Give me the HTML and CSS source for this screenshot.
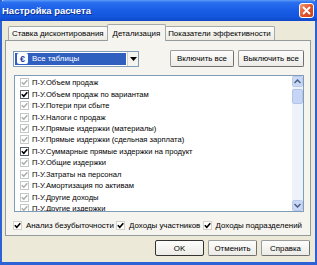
FILE: index.html
```html
<!DOCTYPE html>
<html lang="ru">
<head>
  <meta charset="UTF-8">
  <title>Настройка расчета</title>
  <link rel="stylesheet" href="styles.css">
</head>
<body>
  <div class="window">
    <div class="titlebar">
      <span class="title">Настройка расчета</span>
      <span class="close">
        <svg width="9" height="9" viewBox="0 0 9 9"><path d="M1 1 L8 8 M8 1 L1 8" stroke="#fff" stroke-width="1.8"/></svg>
      </span>
    </div>

    <div class="body">
      <div class="tabs">
        <div class="tab">Ставка дисконтирования</div>
        <div class="tab active">Детализация</div>
        <div class="tab">Показатели эффективности</div>
      </div>

      <div class="panel">
        <div class="toolbar">
          <div class="combo">
            <div class="combo-value">
              <span class="combo-icon">€</span>
              Все таблицы
            </div>
            <div class="combo-arrow">
              <svg width="7" height="4" viewBox="0 0 7 4"><path d="M0 0 H7 L3.5 4 Z" fill="#000"/></svg>
            </div>
          </div>
          <div class="spacer"></div>
          <button class="btn">Включить все</button>
          <button class="btn">Выключить все</button>
        </div>

        <div class="list">
          <div class="items">
            <div class="item"><span class="cb dim"></span>П-У.Объем продаж</div>
            <div class="item"><span class="cb on"></span>П-У.Объем продаж по вариантам</div>
            <div class="item"><span class="cb dim"></span>П-У.Потери при сбыте</div>
            <div class="item"><span class="cb dim"></span>П-У.Налоги с продаж</div>
            <div class="item"><span class="cb dim"></span>П-У.Прямые издержки (материалы)</div>
            <div class="item"><span class="cb dim"></span>П-У.Прямые издержки (сдельная зарплата)</div>
            <div class="item"><span class="cb on"></span>П-У.Суммарные прямые издержки на продукт</div>
            <div class="item"><span class="cb dim"></span>П-У.Общие издержки</div>
            <div class="item"><span class="cb dim"></span>П-У.Затраты на персонал</div>
            <div class="item"><span class="cb dim"></span>П-У.Амортизация по активам</div>
            <div class="item"><span class="cb dim"></span>П-У.Другие доходы</div>
            <div class="item"><span class="cb dim"></span>П-У.Другие издержки</div>
          </div>
          <div class="scrollbar">
            <div class="sb-btn">
              <svg width="7" height="5" viewBox="0 0 7 5"><path d="M0.5 4 L3.5 1 L6.5 4" stroke="#4d6185" stroke-width="1.5" fill="none"/></svg>
            </div>
            <div class="sb-thumb"></div>
            <div class="sb-track"></div>
            <div class="sb-btn">
              <svg width="7" height="5" viewBox="0 0 7 5"><path d="M0.5 1 L3.5 4 L6.5 1" stroke="#4d6185" stroke-width="1.5" fill="none"/></svg>
            </div>
          </div>
        </div>

        <div class="options">
          <label class="option"><span class="cb plain on"></span>Анализ безубыточности</label>
          <label class="option"><span class="cb plain on"></span>Доходы участников</label>
          <label class="option"><span class="cb plain on"></span>Доходы подразделений</label>
        </div>
      </div>

      <div class="actions">
        <button class="btn default">OK</button>
        <button class="btn">Отменить</button>
        <button class="btn">Справка</button>
      </div>
    </div>
  </div>
</body>
</html>
```

FILE: styles.css
```css
* {
  margin: 0;
  padding: 0;
  box-sizing: border-box;
}

body {
  width: 317px;
  height: 265px;
  overflow: hidden;
  font-family: "Liberation Sans", Arial, sans-serif;
  font-size: 7.9px;
  color: #000;
  background: #fff;
}

.window {
  width: 317px;
  height: 265px;
  display: flex;
  flex-direction: column;
  background: #ece9d8;
  border: 2px solid #2d62d6;
  border-top: 0;
  border-bottom-width: 3px;
}

/* заголовок окна */
.titlebar {
  height: 21px;
  margin: 0 -2px;
  padding: 0 3px 0 2px;
  display: flex;
  align-items: center;
  justify-content: space-between;
  background: linear-gradient(#5d9bf7 0%, #2a6ff0 12%, #1a5fe6 45%, #1456de 80%, #1048c8 100%);
  border-radius: 5px 5px 0 0;
}

.title {
  color: #fff;
  font-weight: bold;
  font-size: 9.5px;
  text-shadow: 1px 1px 0 #0b2d8a;
}

.close {
  width: 15px;
  height: 15px;
  display: flex;
  align-items: center;
  justify-content: center;
  border: 1px solid #fff;
  border-radius: 3px;
  background: linear-gradient(135deg, #f29a74 0%, #e0542c 50%, #c8421e 100%);
}

.body {
  flex: 1;
  display: flex;
  flex-direction: column;
  padding: 3px 4px 0 3px;
}

/* вкладки */
.tabs {
  height: 16px;
  display: flex;
  align-items: flex-end;
  padding-left: 3px;
}

.tab {
  height: 14px;
  padding: 0 3px;
  display: flex;
  align-items: center;
  border: 1px solid #a4a9ab;
  border-bottom: 0;
  border-radius: 2px 2px 0 0;
  background: linear-gradient(#fdfdfb, #eceae2);
  white-space: nowrap;
}

.tab + .tab {
  border-left: 0;
}

.tab.active {
  height: 17px;
  margin: 0 -1px -1px;
  padding: 0 5px;
  border-left: 1px solid #a4a9ab;
  background: #f5f4ef;
  position: relative;
  z-index: 1;
}

.tab.active + .tab {
  border-left: 0;
}

.panel {
  height: 196px;
  display: flex;
  flex-direction: column;
  padding: 9px 6px 0 7px;
  border: 1px solid #939b9d;
  background: #f5f4ef;
}

.toolbar {
  height: 17px;
  display: flex;
  align-items: center;
}

.spacer {
  flex: 1;
}

.combo {
  width: 126px;
  height: 16px;
  display: flex;
  border: 1px solid #7f9db9;
  background: #fff;
}

.combo-value {
  flex: 1;
  display: flex;
  align-items: center;
  gap: 4px;
  margin: 1px;
  padding-left: 2px;
  background: #2f5fbf;
  color: #fff;
}

.combo-icon {
  width: 11px;
  height: 11px;
  display: flex;
  align-items: center;
  justify-content: center;
  border-radius: 2px;
  background: #fff;
  color: #1d3f9c;
  font-weight: bold;
  font-size: 9px;
}

.combo-arrow {
  width: 11px;
  display: flex;
  align-items: center;
  justify-content: center;
  border-left: 1px solid #d4d0c8;
  background: #f4f3ee;
}

.btn {
  height: 17px;
  padding: 0 3px;
  font-family: inherit;
  font-size: 7.9px;
  color: #000;
  white-space: nowrap;
  border: 1px solid #9c9c9c;
  border-right-color: #707070;
  border-bottom-color: #707070;
  border-radius: 2px;
  background: linear-gradient(#fdfdfc, #ecebe6);
}

.toolbar .btn {
  width: 64px;
  margin-left: 4px;
}

.toolbar .btn:last-child {
  width: 66px;
}

/* список таблиц */
.list {
  height: 137px;
  margin: 8px 0 0 1px;
  display: flex;
  border: 1px solid #7f9db9;
  background: #fff;
  overflow: hidden;
}

.items {
  flex: 1;
  padding: 1px 0 0 5px;
  font-size: 7.6px;
}

.item {
  height: 11.45px;
  display: flex;
  align-items: center;
  white-space: nowrap;
}

.cb {
  width: 9px;
  height: 9px;
  flex-shrink: 0;
  margin-right: 3px;
  border: 1px solid #1c5180;
  background: #fff center / 7px 7px no-repeat;
}

.cb.on {
  background-image: url("data:image/svg+xml,%3Csvg xmlns='http://www.w3.org/2000/svg' viewBox='0 0 7 7'%3E%3Cpath d='M0.8 3.2 L2.8 5.3 L6.3 1.3' stroke='%23000' stroke-width='1.6' fill='none'/%3E%3C/svg%3E");
}

.cb.dim {
  border-color: #c4c8c6;
  background-image: url("data:image/svg+xml,%3Csvg xmlns='http://www.w3.org/2000/svg' viewBox='0 0 7 7'%3E%3Cpath d='M0.8 3.2 L2.8 5.3 L6.3 1.3' stroke='%23a8aba8' stroke-width='1.4' fill='none'/%3E%3C/svg%3E");
}

.item .cb.on {
  border-color: #55606a;
}

.scrollbar {
  width: 11px;
  display: flex;
  flex-direction: column;
  background: #eef3fb;
}

.sb-btn {
  height: 11px;
  display: flex;
  align-items: center;
  justify-content: center;
  border: 1px solid #b8c9ea;
  border-radius: 2px;
  background: #c9d8f6;
}

.sb-thumb {
  height: 15px;
  margin-top: 2px;
  border: 1px solid #b3c4e8;
  border-radius: 2px;
  background: #c6d5f5;
}

.sb-track {
  flex: 1;
}

.options {
  margin-top: 7px;
  height: 13px;
  display: flex;
  align-items: center;
  justify-content: space-between;
  padding-right: 2px;
}

.option {
  display: flex;
  align-items: center;
  white-space: nowrap;
}

.cb.plain {
  border-color: #d4d2c8;
  margin-right: 4px;
}

.actions {
  height: 24px;
  display: flex;
  align-items: center;
  justify-content: flex-end;
  gap: 4px;
  padding-right: 1px;
}

.actions .btn {
  width: 49px;
  height: 16px;
}

.btn.default {
  border: 1px solid #333;
}
```
